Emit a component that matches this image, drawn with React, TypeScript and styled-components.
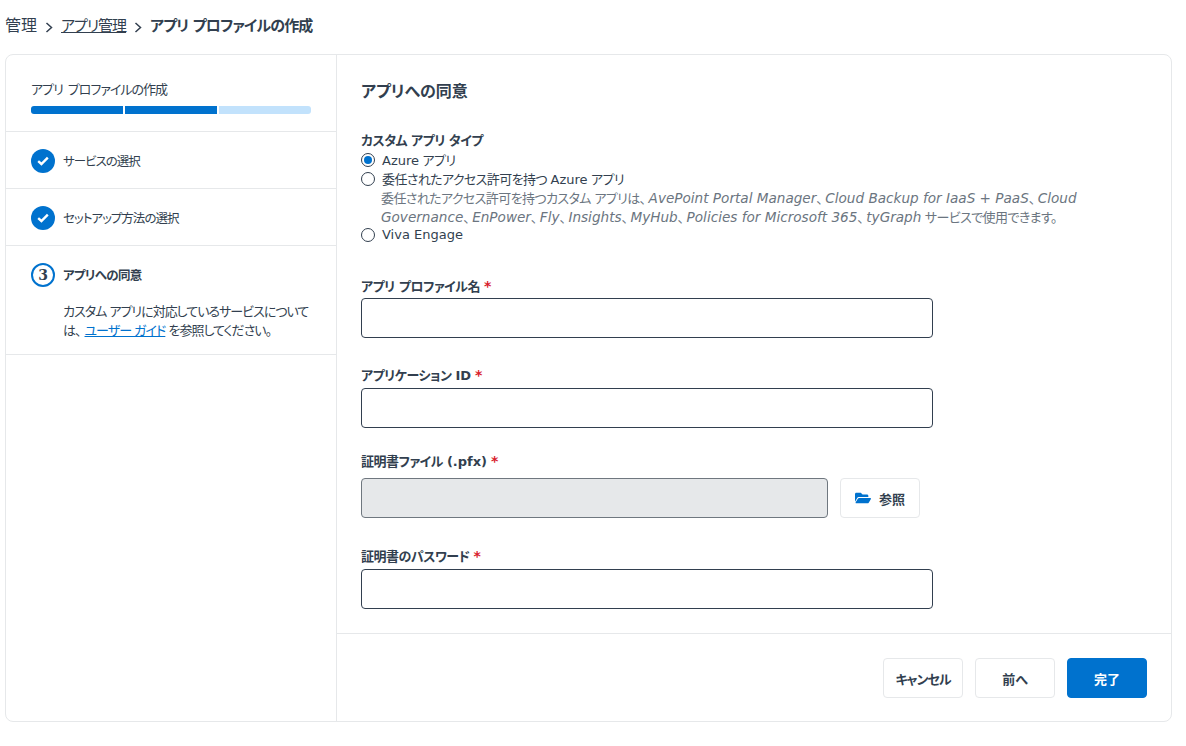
import React from 'react';
import styled, { createGlobalStyle } from 'styled-components';
import { FaFolderOpen } from 'react-icons/fa';

const Global = createGlobalStyle`
  html, body { margin: 0; padding: 0; background: #fff; }
  body {
    font-family: "DejaVu Sans", "Noto Sans CJK JP", sans-serif;
    font-feature-settings: "palt";
    color: #323f4f;
    font-size: 13px;
  }
`;

const Page = styled.div`
  width: 1186px;
  height: 746px;
  box-sizing: border-box;
  padding: 15px 14px 24px 5px;
  display: flex;
  flex-direction: column;
  overflow: hidden;
`;

const Crumbs = styled.nav`
  height: 22px;
  display: flex;
  align-items: center;
  font-size: 16px;
  line-height: 22px;
  margin-bottom: 17px;
`;

const CrumbLink = styled.a`
  color: #323f4f;
  font-size: ${p => (p.$link ? '15px' : '16px')};
  letter-spacing: ${p => (p.$link ? '-1px' : '0')};
  text-decoration: ${p => (p.$link ? 'underline' : 'none')};
`;

const CrumbCurrent = styled.strong`
  font-size: 15px;
  letter-spacing: -0.85px;
  font-weight: 700;
  color: #323f4f;
`;

const Chevron = styled.svg`
  width: 8px;
  height: 11px;
  margin: 2px 8px 0 8px;
  fill: none;
  stroke: #323f4f;
  stroke-width: 1.5;
`;

const Card = styled.div`
  flex: 1;
  min-height: 0;
  display: flex;
  box-sizing: border-box;
  border: 1px solid #e6e8ea;
  border-radius: 8px;
`;

const Side = styled.aside`
  width: 331px;
  flex: none;
  box-sizing: border-box;
  border-right: 1px solid #e6e8ea;
`;

const SideHead = styled.div`
  height: 77px;
  box-sizing: border-box;
  padding: 25px 25px 0;
  border-bottom: 1px solid #e6e8ea;
`;

const SideTitle = styled.div`
  font-size: 13px;
  letter-spacing: -1px;
  word-spacing: 2px;
  line-height: 20px;
  margin-bottom: 6px;
`;

const Progress = styled.div`
  display: flex;
  gap: 2px;
  height: 8px;
  width: 280px;
  border-radius: 3px;
  overflow: hidden;
`;

const Segment = styled.span`
  flex: 1;
  background: ${p => (p.$done ? '#0072ce' : '#c2e2fc')};
`;

const Step = styled.div`
  box-sizing: border-box;
  min-height: 57px;
  padding: 17px 25px 0;
  border-bottom: 1px solid #e6e8ea;
  padding-bottom: ${p => (p.$active ? '14px' : '0')};
`;

const StepRow = styled.div`
  display: flex;
  align-items: center;
  gap: 8px;
  height: 24px;
`;

const Badge = styled.span`
  width: 24px;
  height: 24px;
  box-sizing: border-box;
  flex: none;
  border-radius: 50%;
  display: flex;
  align-items: center;
  justify-content: center;
  background: ${p => (p.$active ? '#fff' : '#0072ce')};
  border: ${p => (p.$active ? '2px solid #0072ce' : 'none')};
  color: #323f4f;
  font-family: "DejaVu Serif", serif;
  font-weight: 700;
  font-size: 14px;
`;

const StepName = styled.span`
  font-size: 12.5px;
  margin-bottom: 2px;
  letter-spacing: ${p => (p.$active ? '-0.7px' : '-1px')};
  font-weight: ${p => (p.$active ? 700 : 400)};
`;

const StepNote = styled.p`
  margin: 15px 0 0 32px;
  font-size: 13px;
  letter-spacing: -1px;
  line-height: 19px;
`;

const NoteLink = styled.a`
  color: #0072ce;
  margin-left: 4px;
  text-decoration: underline;
`;

const Main = styled.main`
  flex: 1;
  min-width: 0;
  display: flex;
  flex-direction: column;
`;

const Form = styled.div`
  flex: 1;
  box-sizing: border-box;
  padding: 25px 24px 0;
`;

const Heading = styled.h2`
  margin: 0 0 26px;
  font-size: 16px;
  line-height: 24px;
  font-weight: 700;
`;

const Label = styled.div`
  font-size: 13px;
  letter-spacing: -0.5px;
  height: 20px;
  line-height: 22px;
  font-weight: 700;
`;

const Latin = styled.span`
  letter-spacing: 0;
`;

const Star = styled.span`
  color: #d8202c;
  font-size: 14px;
  line-height: 14px;
  margin-left: 4px;
`;

const Radio = styled.label`
  display: flex;
  align-items: center;
  gap: 7px;
  height: 19px;
  font-size: 13px;
  letter-spacing: -0.6px;
  white-space: pre;
`;

const Dot = styled.span`
  width: 14px;
  height: 14px;
  box-sizing: border-box;
  flex: none;
  border-radius: 50%;
  border: 1.5px solid #323f4f;
  display: flex;
  align-items: center;
  justify-content: center;
  &::after {
    content: '';
    width: 8px;
    height: 8px;
    border-radius: 50%;
    background: ${p => (p.$on ? '#0072ce' : 'transparent')};
  }
`;

const RadioNote = styled.div`
  margin: 1px 0 -2px 20px;
  width: 720px;
  font-size: 13px;
  letter-spacing: -0.6px;
  line-height: 19px;
  color: #6b7580;
`;

const Product = styled.i`
  font-size: 13.6px;
  letter-spacing: 0;
  margin-left: 3px;
`;

const Field = styled.div`
  margin-top: ${p => p.$top}px;
`;

const Control = styled.div`
  display: flex;
  gap: 12px;
  margin-top: ${p => p.$gap}px;
`;

const Input = styled.div`
  width: ${p => p.$width}px;
  height: 40px;
  box-sizing: border-box;
  border-radius: 4px;
  border: 1px solid ${p => (p.$disabled ? '#6f777f' : '#323f4f')};
  background: ${p => (p.$disabled ? '#e6e8ea' : '#fff')};
`;

const Button = styled.button`
  height: 40px;
  width: ${p => p.$width}px;
  box-sizing: border-box;
  border-radius: 4px;
  border: 1px solid ${p => (p.$primary ? '#0072ce' : '#e6e8ea')};
  background: ${p => (p.$primary ? '#0072ce' : '#fff')};
  color: ${p => (p.$primary ? '#fff' : '#323f4f')};
  font-family: inherit;
  font-feature-settings: inherit;
  font-size: 13px;
  letter-spacing: ${p => (p.$tight ? '-1px' : '0')};
  font-weight: 700;
  padding: 0;
  display: flex;
  align-items: center;
  justify-content: center;
  gap: 8px;
`;

const FolderIcon = styled(FaFolderOpen)`
  color: #0072ce;
  width: 16px;
  height: 16px;
`;

const Footer = styled.footer`
  height: 88px;
  box-sizing: border-box;
  border-top: 1px solid #e6e8ea;
  padding: 24px 24px 0 0;
  display: flex;
  justify-content: flex-end;
  gap: 12px;
`;

const Sep = () => (
  <Chevron viewBox="0 0 8 11">
    <path d="M1.5 1 L6.5 5.5 L1.5 10" />
  </Chevron>
);

const Check = () => (
  <svg width="12" height="10" viewBox="0 0 12 10" fill="none" stroke="#fff" strokeWidth="2.4">
    <path d="M1.2 5.2 L4.4 8 L10.8 1.6" />
  </svg>
);

export default function App() {
  return (
    <Page>
      <Global />
      <Crumbs>
        <CrumbLink>管理</CrumbLink>
        <Sep />
        <CrumbLink $link>アプリ管理</CrumbLink>
        <Sep />
        <CrumbCurrent>アプリ プロファイルの作成</CrumbCurrent>
      </Crumbs>
      <Card>
        <Side>
          <SideHead>
            <SideTitle>アプリ プロファイルの作成</SideTitle>
            <Progress>
              <Segment $done />
              <Segment $done />
              <Segment />
            </Progress>
          </SideHead>
          <Step>
            <StepRow>
              <Badge><Check /></Badge>
              <StepName>サービスの選択</StepName>
            </StepRow>
          </Step>
          <Step>
            <StepRow>
              <Badge><Check /></Badge>
              <StepName>セットアップ方法の選択</StepName>
            </StepRow>
          </Step>
          <Step $active>
            <StepRow>
              <Badge $active>3</Badge>
              <StepName $active>アプリへの同意</StepName>
            </StepRow>
            <StepNote>
              カスタム アプリに対応しているサービスについては、<NoteLink>ユーザー ガイド</NoteLink> を参照してください。
            </StepNote>
          </Step>
        </Side>
        <Main>
          <Form>
            <Heading>アプリへの同意</Heading>
            <Label>カスタム アプリ タイプ</Label>
            <Radio><Dot $on /><span><Latin>Azure</Latin> アプリ</span></Radio>
            <Radio><Dot /><span>委任されたアクセス許可を持つ <Latin>Azure</Latin> アプリ</span></Radio>
            <RadioNote>
              委任されたアクセス許可を持つカスタム アプリは、<Product>AvePoint Portal Manager</Product>、<Product>Cloud Backup for IaaS + PaaS</Product>、<Product>Cloud Governance</Product>、<Product>EnPower</Product>、<Product>Fly</Product>、<Product>Insights</Product>、<Product>MyHub</Product>、<Product>Policies for Microsoft 365</Product>、<Product>tyGraph</Product> サービスで使用できます。
            </RadioNote>
            <Radio><Dot /><Latin>Viva Engage</Latin></Radio>
            <Field $top={32}>
              <Label>アプリ プロファイル名<Star>*</Star></Label>
              <Control $gap={2}><Input $width={572} /></Control>
            </Field>
            <Field $top={27}>
              <Label>アプリケーション <Latin>ID</Latin><Star>*</Star></Label>
              <Control $gap={3}><Input $width={572} /></Control>
            </Field>
            <Field $top={23}>
              <Label>証明書ファイル <Latin>(.pfx)</Latin><Star>*</Star></Label>
              <Control $gap={7}>
                <Input $width={467} $disabled />
                <Button $width={80}><FolderIcon />参照</Button>
              </Control>
            </Field>
            <Field $top={28}>
              <Label>証明書のパスワード<Star>*</Star></Label>
              <Control $gap={3}><Input $width={572} /></Control>
            </Field>
          </Form>
          <Footer>
            <Button $width={80} $tight>キャンセル</Button>
            <Button $width={80}>前へ</Button>
            <Button $width={80} $primary>完了</Button>
          </Footer>
        </Main>
      </Card>
    </Page>
  );
}
